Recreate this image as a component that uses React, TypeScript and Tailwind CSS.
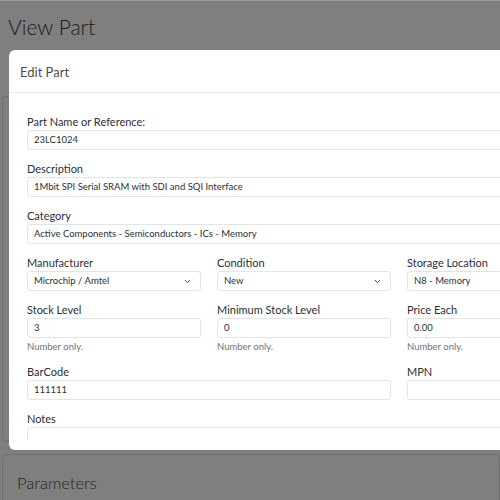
import { ChevronDown } from "lucide-react";

const font = { fontFamily: 'Lato, "Noto Sans", sans-serif' };

function Label({ children }: { children: React.ReactNode }) {
  return <div className="text-[11px] leading-[16px] text-[#2b2f33] whitespace-nowrap">{children}</div>;
}

function Input({ value = "" }: { value?: string }) {
  return (
    <div className="h-[20px] rounded-[3px] border border-[#e3e4e6] px-[6px] text-[9.5px] leading-[18px] text-[#2b2f33] whitespace-nowrap overflow-hidden">
      {value}
    </div>
  );
}

function Select({ value }: { value: string }) {
  return (
    <div className="h-[20px] rounded-[3px] border border-[#e3e4e6] pl-[6px] pr-[8px] text-[9.5px] leading-[18px] text-[#2b2f33] flex items-center justify-between whitespace-nowrap">
      <span>{value}</span>
      <ChevronDown size={9} strokeWidth={2.5} className="text-[#343a40]" />
    </div>
  );
}

function Help() {
  return <div className="mt-[3px] text-[9.5px] leading-[12px] text-[#6c757d]">Number only.</div>;
}

export default function App() {
  return (
    <div className="relative w-[500px] h-[500px] overflow-hidden bg-[#7f7f7f]" style={font}>
      <div className="h-px bg-[#9c9c9c]" />
      <div className="pl-[8px] pt-[12px] text-[21px] leading-[28px] font-light text-[#1a1a1a]">View Part</div>
      <div className="ml-[2px] mt-[55px] h-[346px] rounded-[4px] border border-[#6f6f6f]" />
      <div className="ml-[2px] mt-[12px] h-[60px] rounded-[4px] border border-[#6f6f6f] pl-[14px] pt-[17px] text-[16.5px] leading-[22px] font-light text-[#1f1f1f]">
        Parameters
      </div>

      {/* modal */}
      <div className="absolute left-[9px] top-[50px] w-[520px] h-[400px] rounded-[6px] bg-white overflow-hidden">
        <div className="h-[43px] border-b border-[#e9ecef] pl-[11px] pt-[3px] flex items-center text-[13px] text-[#4a4d50]">Edit Part</div>
        <div className="h-[347px] overflow-hidden pl-[18px] pt-[21px]">
          <div className="flex flex-col gap-[11px]">
            <div>
              <Label>Part Name or Reference:</Label>
              <Input value="23LC1024" />
            </div>
            <div>
              <Label>Description</Label>
              <Input value="1Mbit SPI Serial SRAM with SDI and SQI Interface" />
            </div>
            <div>
              <Label>Category</Label>
              <Input value="Active Components - Semiconductors - ICs - Memory" />
            </div>
            <div className="grid grid-cols-[174px_174px_174px] gap-x-[16px] gap-y-[11px]">
              <div>
                <Label>Manufacturer</Label>
                <Select value="Microchip / Amtel" />
              </div>
              <div>
                <Label>Condition</Label>
                <Select value="New" />
              </div>
              <div>
                <Label>Storage Location</Label>
                <Select value="N8 - Memory" />
              </div>
              <div>
                <Label>Stock Level</Label>
                <Input value="3" />
                <Help />
              </div>
              <div>
                <Label>Minimum Stock Level</Label>
                <Input value="0" />
                <Help />
              </div>
              <div>
                <Label>Price Each</Label>
                <Input value="0.00" />
                <Help />
              </div>
              <div className="col-span-2">
                <Label>BarCode</Label>
                <Input value="111111" />
              </div>
              <div>
                <Label>MPN</Label>
                <Input />
              </div>
            </div>
            <div>
              <Label>Notes</Label>
              <div className="h-[60px] rounded-[3px] border border-[#e3e4e6]" />
            </div>
          </div>
        </div>
      </div>
    </div>
  );
}
